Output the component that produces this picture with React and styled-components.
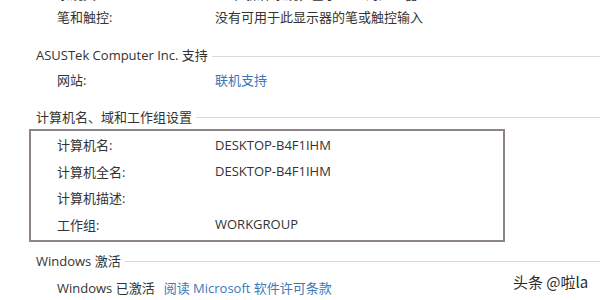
import React from "react";
import styled, { createGlobalStyle } from "styled-components";

const Global = createGlobalStyle`
  html, body { margin: 0; padding: 0; background: #ffffff; }
  body {
    width: 600px; height: 300px; overflow: hidden;
    font-family: "Open Sans", "Noto Sans CJK SC", sans-serif;
    font-size: 13px; color: #333333;
  }
`;

const Page = styled.div`
  position: relative;
  width: 600px;
  height: 300px;
  overflow: hidden;
  display: flex;
  flex-direction: column;
`;

const Row = styled.div`
  display: grid;
  grid-template-columns: 158px 1fr;
  align-items: center;
  height: ${(p) => p.$h || 26}px;
  padding-left: ${(p) => (p.$inset ? 57 - p.$inset : 57)}px;
  margin-top: ${(p) => p.$mt || 0}px;
  white-space: nowrap;
`;

const Label = styled.span``;

const Value = styled.span`
  color: ${(p) => (p.$link ? "#3b78b8" : "#333333")};
`;

const Header = styled.div`
  display: flex;
  align-items: center;
  height: 26px;
  padding-left: 36px;
  gap: 4px;
  margin-top: ${(p) => p.$mt || 0}px;
  white-space: nowrap;
  &::after {
    content: "";
    flex: 1;
    height: 1px;
    margin-top: 3px;
    background: #d9d9d9;
  }
`;

const Box = styled.div`
  margin-left: 29px;
  width: 472px;
  border: 2px solid #8d8388;
  display: flex;
  flex-direction: column;
  padding-top: 1px;
  padding-bottom: 2px;
`;

const Inline = styled.div`
  display: flex;
  align-items: center;
  gap: 9px;
  height: 26px;
  padding-left: 57px;
  margin-top: 2px;
  white-space: nowrap;
`;

const Link = styled.span`
  color: #3b78b8;
`;

const Watermark = styled.div`
  position: absolute;
  left: 513px;
  top: 271px;
  font-family: "Noto Sans CJK SC", sans-serif;
  font-size: 15px;
  color: #2a2a2a;
  white-space: nowrap;
`;

export default function App() {
  return (
    <Page>
      <Global />
      <Row $mt={-19}>
        <Label>系统类型:</Label>
        <Value>64 位操作系统，基于 x64 的处理器</Value>
      </Row>
      <Row $mt={-2}>
        <Label>笔和触控:</Label>
        <Value>没有可用于此显示器的笔或触控输入</Value>
      </Row>
      <Header $mt={13}>ASUSTek Computer Inc. 支持</Header>
      <Row>
        <Label>网站:</Label>
        <Value $link>联机支持</Value>
      </Row>
      <Header $mt={11}>计算机名、域和工作组设置</Header>
      <Box>
        <Row $inset={31} $h={26.5}>
          <Label>计算机名:</Label>
          <Value>DESKTOP-B4F1IHM</Value>
        </Row>
        <Row $inset={31} $h={26.5}>
          <Label>计算机全名:</Label>
          <Value>DESKTOP-B4F1IHM</Value>
        </Row>
        <Row $inset={31} $h={26.5}>
          <Label>计算机描述:</Label>
          <Value></Value>
        </Row>
        <Row $inset={31} $h={26.5}>
          <Label>工作组:</Label>
          <Value>WORKGROUP</Value>
        </Row>
      </Box>
      <Header $mt={6}>Windows 激活</Header>
      <Inline>
        <span>Windows 已激活</span>
        <Link>阅读 Microsoft 软件许可条款</Link>
      </Inline>
      <Watermark>头条 @啦la</Watermark>
    </Page>
  );
}
